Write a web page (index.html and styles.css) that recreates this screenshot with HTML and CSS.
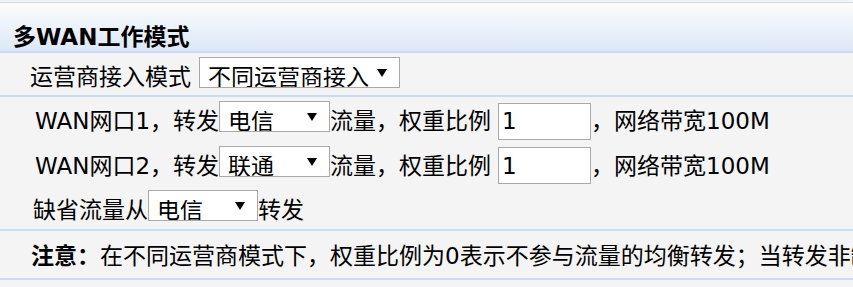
FILE: index.html
```html
<!DOCTYPE html>
<html lang="zh-CN">

<head>
    <meta charset="UTF-8">
    <meta name="viewport" content="width=device-width, initial-scale=1.0">
    <title>多WAN工作模式</title>
    <link rel="stylesheet" href="styles.css">
</head>

<body>
    <div class="panel">
        <div class="panel-title">多WAN工作模式</div>

        <div class="row row-mode">
            <span>运营商接入模式</span>
            <span class="select-wrap mode-select">
                <select id="isp-mode">
                    <option>不同运营商接入</option>
                    <option>相同运营商接入</option>
                </select>
            </span>
        </div>

        <div class="row group">
            <div class="line">
                <span>WAN网口1，转发</span>
                <span class="select-wrap isp-select">
                    <select id="wan1-isp">
                        <option selected>电信</option>
                        <option>联通</option>
                        <option>移动</option>
                    </select>
                </span>
                <span>流量，权重比例</span>
                <input type="text" class="weight" id="wan1-weight" value="1">
                <span>，网络带宽100M</span>
            </div>
            <div class="line">
                <span>WAN网口2，转发</span>
                <span class="select-wrap isp-select">
                    <select id="wan2-isp">
                        <option>电信</option>
                        <option selected>联通</option>
                        <option>移动</option>
                    </select>
                </span>
                <span>流量，权重比例</span>
                <input type="text" class="weight" id="wan2-weight" value="1">
                <span>，网络带宽100M</span>
            </div>
            <div class="line">
                <span>缺省流量从</span>
                <span class="select-wrap default-select">
                    <select id="default-isp">
                        <option selected>电信</option>
                        <option>联通</option>
                    </select>
                </span>
                <span>转发</span>
            </div>
        </div>

        <div class="row note">
            <b>注意：</b>在不同运营商模式下，权重比例为0表示不参与流量的均衡转发；当转发非缺省流量时，按照权重比例进行均衡转发。
        </div>
    </div>
</body>

</html>
```

FILE: styles.css
```css
body {
    margin: 0;
    background: #f4f4f4;
    font-family: "DejaVu Sans", "Noto Sans CJK SC", sans-serif;
    font-size: 23px;
    color: #000;
}

.panel {
    padding-top: 2px;
    overflow: hidden;
}

.panel-title {
    border-top: 1px solid #cbdcef;
    border-bottom: 2px solid #c9dbef;
    background: linear-gradient(to bottom, #fbfcfe, #dce8f6);
    height: 51px;
    box-sizing: border-box;
    padding: 15px 0 0 13px;
    font-weight: bold;
    line-height: normal;
}

.row {
    border-bottom: 2px solid #c9dcf0;
}

.row-mode {
    display: flex;
    align-items: baseline;
    padding: 4px 0 3px 30px;
}

.row-mode .select-wrap {
    margin-left: 8px;
}

.group {
    padding: 4px 0 4px 35px;
}

.line {
    display: flex;
    align-items: baseline;
    white-space: nowrap;
}

.line + .line {
    margin-top: 6px;
}

.line:last-child {
    margin-left: -2px;
}

.select-wrap {
    position: relative;
    display: inline-flex;
}

.select-wrap::after {
    content: "";
    position: absolute;
    top: 12px;
    right: 13px;
    border-left: 5px solid transparent;
    border-right: 5px solid transparent;
    border-top: 8px solid #000;
    pointer-events: none;
}

select {
    appearance: none;
    -webkit-appearance: none;
    font: inherit;
    color: #000;
    background: #fff;
    border: 1px solid #a9a9a9;
    border-radius: 0;
    margin: 0;
    padding: 9px 0 0 8px;
    line-height: 20px;
    box-sizing: border-box;
    outline: none;
}

.mode-select select {
    width: 201px;
}

.isp-select select {
    width: 111px;
}

.default-select select {
    width: 110px;
}

.weight {
    font: inherit;
    color: #000;
    background: #fff;
    border: 1px solid #a9a9a9;
    border-radius: 0;
    width: 93px;
    height: 37px;
    box-sizing: border-box;
    padding: 0 3px;
    margin: 0 0 0 7px;
}

.note {
    white-space: nowrap;
    padding: 6px 0 7px 31px;
}
```
